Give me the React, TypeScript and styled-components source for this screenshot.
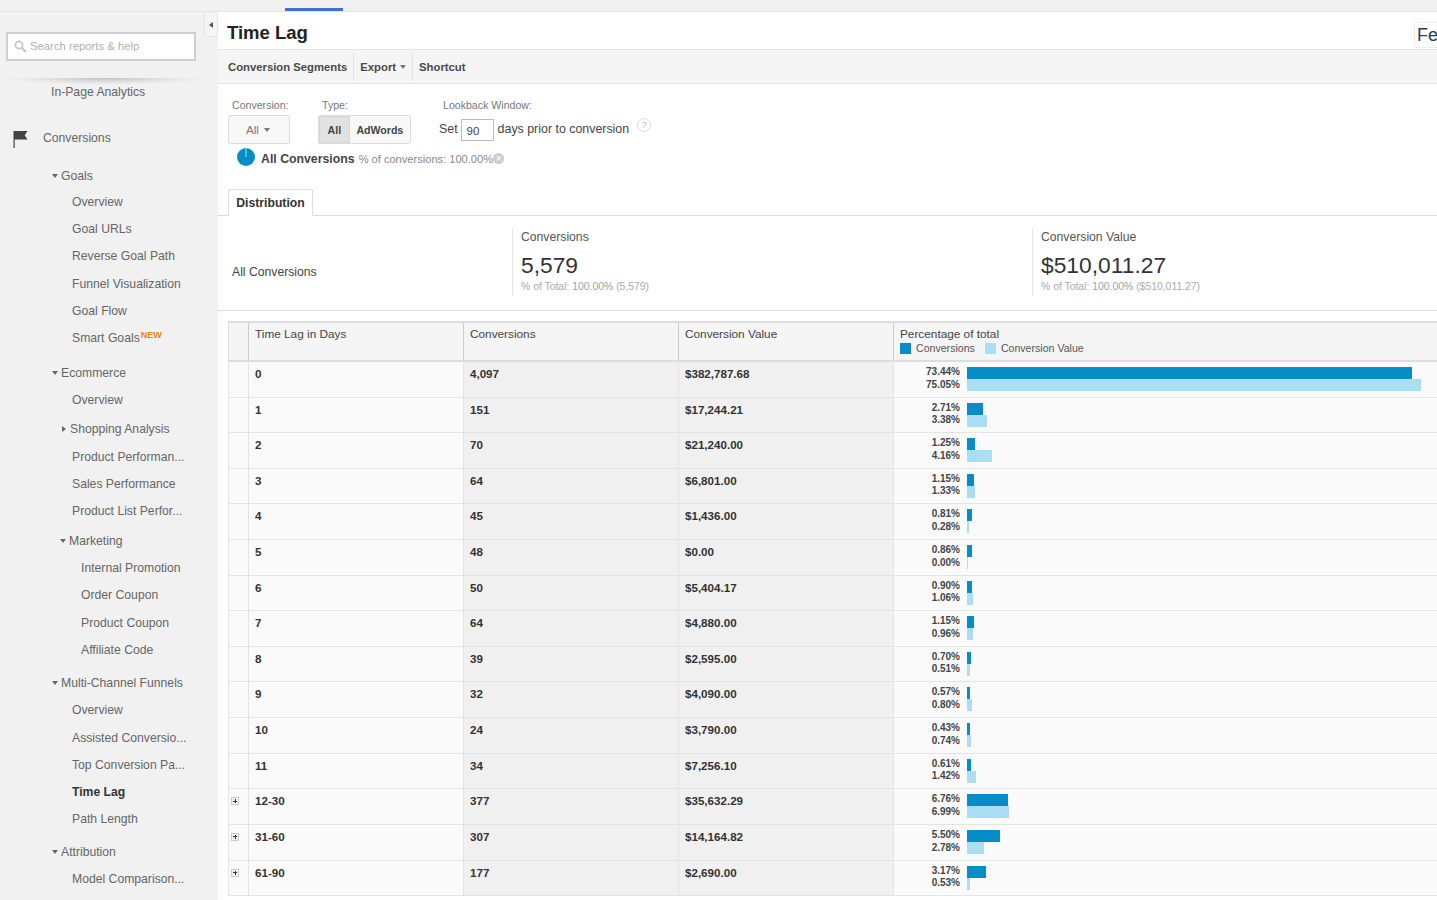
import React from "react";
import styled, { createGlobalStyle } from "styled-components";

const Global = createGlobalStyle`
  html, body { margin: 0; padding: 0; height: 100%; overflow: hidden; background: #fff; }
  body { font-family: "Liberation Sans", Arial, sans-serif; color: #333; }
  * { box-sizing: border-box; }
`;

const Page = styled.div`
  width: 1437px; height: 900px; overflow: hidden; display: flex; flex-direction: column;
`;
const TopStrip = styled.div`
  height: 12px; flex: none; background: #f1f1f1; border-bottom: 1px solid #e6e6e6; padding: 8px 0 0 285px;
`;
const TopMarker = styled.div`
  width: 58px; height: 3px; background: #3f6fd8;
`;
const Body = styled.div`
  flex: 1; min-height: 0; display: flex;
`;
const Sidebar = styled.aside`
  width: 218px; flex: none; background: #f1f1f1; position: relative; overflow: hidden;
`;
const Collapse = styled.div`
  position: absolute; left: 204px; top: 1px; width: 14px; height: 24px; background: #f5f5f5;
  border: 1px solid #e6e6e6; border-top: 0; display: flex; align-items: center; justify-content: center;
`;
const CollapseArrow = styled.span`
  border-top: 3.5px solid transparent; border-bottom: 3.5px solid transparent; border-right: 4px solid #555;
`;
const SearchArea = styled.div`
  height: 66px; padding: 20px 22px 0 6px; position: relative;
  &::after {
    content: ""; position: absolute; left: 0; right: 8px; top: 100%; height: 7px;
    background: radial-gradient(ellipse 50% 100% at 50% 0, rgba(0,0,0,.2), rgba(0,0,0,.04) 70%, transparent);
  }
`;
const SearchBox = styled.div`
  height: 29px; width: 190px; background: #fff; border: 2px solid #cfcfcf; display: flex; align-items: center;
  padding: 0 0 1px 6px; gap: 3px; font-size: 11.3px; color: #b0b0b0;
`;
const NavRow = styled.div<{ $indent: number; $gap?: number; $bold?: boolean; $low?: boolean }>`
  height: 27.25px; display: flex; align-items: center; position: relative;
  padding-left: ${p => p.$indent}px; margin-top: ${p => p.$gap ?? 0}px;
  ${p => (p.$low ? "padding-top: 2px;" : "")}
  font-size: 12.2px; color: ${p => (p.$bold ? "#333" : "#666")}; font-weight: ${p => (p.$bold ? 700 : 400)};
  white-space: nowrap;
`;
const NewBadge = styled.sup`
  font-size: 9px; font-weight: 700; color: #e8860c; position: relative; top: -3px; line-height: 0;
  vertical-align: baseline; margin-left: 1px;
`;
const Tri = styled.span<{ $open: boolean }>`
  width: 0; height: 0; flex: none; margin-right: 3px;
  ${p => p.$open
    ? "border-left: 3.5px solid transparent; border-right: 3.5px solid transparent; border-top: 4px solid #666;"
    : "border-top: 3.5px solid transparent; border-bottom: 3.5px solid transparent; border-left: 4px solid #666; margin-right: 4px;"}
`;
const FlagWrap = styled.span`
  width: 30px; flex: none; display: flex; margin-left: -30px; margin-top: 2px;
`;
const Main = styled.main`
  flex: 1; min-width: 0; display: flex; flex-direction: column;
`;
const TitleBar = styled.div`
  height: 38px; flex: none; background: #fff; border-bottom: 1px solid #e3e3e3; display: flex; align-items: center;
  justify-content: space-between; padding-left: 9px;
`;
const Title = styled.h1`
  margin: 0; font-size: 18.5px; font-weight: 700; color: #222; position: relative; top: 2px;
`;
const FeBox = styled.div`
  width: 23px; height: 26px; margin-top: 8px; border: 1px solid #eee; border-right: 0; border-radius: 4px 0 0 4px;
  font-size: 18px; color: #2c3e50; overflow: hidden; padding-left: 2px; line-height: 24px;
`;
const Toolbar = styled.div`
  height: 34px; flex: none; background: #f5f5f5; border-bottom: 1px solid #e3e3e3; display: flex; align-items: center;
  padding-left: 10px;
`;
const ToolItem = styled.div<{ $first?: boolean }>`
  height: 28px; display: flex; align-items: center; gap: 4px; font-size: 11.3px; font-weight: 700; color: #4a4a4a;
  padding: 0 6px; ${p => (p.$first ? "padding-left: 0;" : "")}
  & + & { border-left: 1px solid #e3e3e3; }
`;
const Caret = styled.span<{ $c?: string }>`
  width: 0; height: 0; border-left: 3.5px solid transparent; border-right: 3.5px solid transparent;
  border-top: 4px solid ${p => p.$c ?? "#777"};
`;
const Filters = styled.div`
  height: 105px; flex: none; padding: 15px 0 0 10px; display: flex; flex-direction: column;
`;
const FilterRow = styled.div`
  display: flex; align-items: flex-start;
`;
const FilterGroup = styled.div<{ $width: number }>`
  width: ${p => p.$width}px; flex: none; display: flex; flex-direction: column; gap: 4px;
`;
const FilterLabel = styled.div`
  font-size: 10.6px; color: #777; height: 12px; line-height: 12px; padding-left: 4px;
`;
const SelectBtn = styled.div`
  width: 62px; height: 29px; border: 1px solid #ddd; border-radius: 2px; background: #f8f8f8; display: flex;
  align-items: center; justify-content: center; gap: 5px; font-size: 11.6px; color: #777; padding-right: 2px;
`;
const Segments = styled.div`
  width: 93px; height: 29px; border: 1px solid #ddd; border-radius: 2px; display: flex; overflow: hidden; background: #f8f8f8;
`;
const Segment = styled.div<{ $active?: boolean }>`
  display: flex; align-items: center; justify-content: center; font-size: 10.6px; font-weight: 700; color: #444;
  width: ${p => (p.$active ? "31px" : "61px")};
  background: ${p => (p.$active ? "#e2e2e2" : "transparent")};
  ${p => (p.$active ? "box-shadow: inset 0 0 2px #bbb;" : "")}
`;
const LookRow = styled.div`
  display: flex; align-items: center; gap: 3px; font-size: 12.4px; color: #444; margin-top: 1px; height: 26px;
`;
const DaysInput = styled.div`
  width: 33px; height: 22px; border: 1px solid #bbb; font-size: 11.5px; padding-left: 5px; line-height: 22px; color: #444; margin: 1px 1px 0 0;
`;
const Help = styled.span`
  width: 14px; height: 14px; border-radius: 50%; border: 1px solid #ddd; font-size: 9px; color: #bbb; display: inline-flex;
  align-items: center; justify-content: center; margin: -8px 0 0 5px;
`;
const Legend = styled.div`
  display: flex; align-items: center; margin: 5px 0 0 9px; height: 20px;
`;
const PieWrap = styled.span`
  display: flex; margin-bottom: 4px;
`;
const LegendName = styled.span`
  font-size: 12.3px; font-weight: 700; color: #444; margin: 0 4px 0 6px;
`;
const LegendPct = styled.span`
  font-size: 11.1px; color: #888;
`;
const CloseDot = styled.span`
  width: 11px; height: 11px; border-radius: 50%; background: #ccc; color: #fff; font-size: 10px; line-height: 11px; text-align: center; margin-top: -2px;
`;
const TabBar = styled.div`
  height: 27px; flex: none; border-bottom: 1px solid #ddd; padding-left: 10px; display: flex;
`;
const Tab = styled.div`
  width: 85px; height: 27px; border: 1px solid #ddd; border-bottom: 1px solid #fff; font-size: 12.2px; font-weight: 700; color: #333;
  display: flex; align-items: center; justify-content: center; background: #fff; border-radius: 2px 2px 0 0;
`;
const Summary = styled.div`
  height: 95px; flex: none; display: grid; grid-template-columns: 294px 520px 1fr; border-bottom: 1px solid #ddd; padding-top: 13px;
`;
const SummaryName = styled.div`
  font-size: 12.2px; color: #444; padding: 0 0 0 14px; height: 67px; display: flex; align-items: center; position: relative; top: 9px;
`;
const SummaryCell = styled.div`
  height: 67px; border-left: 1px solid #e3e3e3; padding-left: 8px; display: flex; flex-direction: column;
`;
const SummaryLabel = styled.div`
  font-size: 12.2px; color: #555; line-height: 16px;
`;
const SummaryValue = styled.div`
  font-size: 22.8px; color: #333; line-height: 28px; margin-top: 6px;
`;
const SummaryNote = styled.div`
  font-size: 10.4px; color: #aaa; line-height: 14px; margin-top: 1px;
  & b { font-weight: 400; color: #8fa5a5; }
`;
const TableWrap = styled.div`
  margin: 10px 0 0 10px; flex: none;
`;
const gridCols = "20px 215px 215px 215px 560px";
const HeadRow = styled.div`
  display: grid; grid-template-columns: ${gridCols}; height: 41px; background: #f5f5f5;
  border-top: 2px solid #ddd; border-left: 1px solid #ddd; border-bottom: 2px solid #ddd;
`;
const HeadCell = styled.div`
  border-right: 1px solid #ccc; font-size: 11.8px; color: #444; padding: 4px 0 0 6px; line-height: 14px;
  &:last-child { border-right: 0; }
`;
const LegendLine = styled.div`
  display: flex; align-items: center; font-size: 10.6px; color: #555; gap: 5px;
`;
const Swatch = styled.span<{ $c: string }>`
  width: 11px; height: 11px; background: ${p => p.$c}; flex: none;
`;
const SecondSwatch = styled(Swatch)`
  margin-left: 5px;
`;
const Row = styled.div`
  display: grid; grid-template-columns: ${gridCols}; height: 35.62px; border-left: 1px solid #e6e6e6; border-bottom: 1px solid #e4e4e4;
`;
const Cell = styled.div<{ $shade?: boolean }>`
  background: ${p => (p.$shade ? "#f0f0f0" : "#fafafa")}; border-right: 1px solid #e4e4e4;
  font-size: 11.6px; font-weight: 700; color: #333; padding: 5px 0 0 6px; line-height: 14px;
`;
const CheckCell = styled(Cell)`
  padding: 8px 0 0 2px; background: #fafafa;
`;
const PlusBox = styled.span`
  display: block; width: 8px; height: 8px; border: 1px solid #ccc; background: #eee; position: relative;
  &::before { content: ""; position: absolute; left: 1px; right: 1px; top: 2.5px; height: 1px; background: #333; }
  &::after { content: ""; position: absolute; top: 1px; bottom: 1px; left: 2.5px; width: 1px; background: #333; }
`;
const PctCell = styled.div`
  background: #fafafa; display: grid; grid-template-columns: 66px auto; justify-content: start; column-gap: 7px; padding-top: 4px;
`;
const PctLabels = styled.div`
  font-size: 10px; font-weight: 700; color: #444; line-height: 12.6px; text-align: right;
`;
const Bars = styled.div`
  display: flex; flex-direction: column; padding-top: 1px;
`;
const Bar = styled.div<{ $c: string }>`
  height: 12px; background: ${p => p.$c}; min-width: 1px;
`;

const BLUE = "#058dc7";
const LIGHT = "#aadff3";

const nav: { t: string; i: number; g?: number; tri?: "open" | "closed"; bold?: boolean; isNew?: boolean; flag?: boolean; low?: boolean }[] = [
  { t: "In-Page Analytics", i: 51, g: 0 },
  { t: "Conversions", i: 43, g: 19.5, flag: true },
  { t: "Goals", i: 52, g: 9, tri: "open", low: true },
  { t: "Overview", i: 72 },
  { t: "Goal URLs", i: 72 },
  { t: "Reverse Goal Path", i: 72 },
  { t: "Funnel Visualization", i: 72 },
  { t: "Goal Flow", i: 72 },
  { t: "Smart Goals", i: 72, isNew: true },
  { t: "Ecommerce", i: 52, g: 7, tri: "open", low: true },
  { t: "Overview", i: 72 },
  { t: "Shopping Analysis", i: 62, g: 2.5, tri: "closed" },
  { t: "Product Performan...", i: 72 },
  { t: "Sales Performance", i: 72 },
  { t: "Product List Perfor...", i: 72 },
  { t: "Marketing", i: 60, g: 2.5, tri: "open" },
  { t: "Internal Promotion", i: 81 },
  { t: "Order Coupon", i: 81 },
  { t: "Product Coupon", i: 81 },
  { t: "Affiliate Code", i: 81 },
  { t: "Multi-Channel Funnels", i: 52, g: 6, tri: "open" },
  { t: "Overview", i: 72 },
  { t: "Assisted Conversio...", i: 72 },
  { t: "Top Conversion Pa...", i: 72 },
  { t: "Time Lag", i: 72, bold: true },
  { t: "Path Length", i: 72 },
  { t: "Attribution", i: 52, g: 5.5, tri: "open" },
  { t: "Model Comparison...", i: 72 },
];

const rows: [string, string, string, number, number, boolean?][] = [
  ["0", "4,097", "$382,787.68", 73.44, 75.05],
  ["1", "151", "$17,244.21", 2.71, 3.38],
  ["2", "70", "$21,240.00", 1.25, 4.16],
  ["3", "64", "$6,801.00", 1.15, 1.33],
  ["4", "45", "$1,436.00", 0.81, 0.28],
  ["5", "48", "$0.00", 0.86, 0],
  ["6", "50", "$5,404.17", 0.9, 1.06],
  ["7", "64", "$4,880.00", 1.15, 0.96],
  ["8", "39", "$2,595.00", 0.7, 0.51],
  ["9", "32", "$4,090.00", 0.57, 0.8],
  ["10", "24", "$3,790.00", 0.43, 0.74],
  ["11", "34", "$7,256.10", 0.61, 1.42],
  ["12-30", "377", "$35,632.29", 6.76, 6.99, true],
  ["31-60", "307", "$14,164.82", 5.5, 2.78, true],
  ["61-90", "177", "$2,690.00", 3.17, 0.53, true],
];

const Flag = () => (
  <svg width="16" height="19" viewBox="0 0 16 19">
    <path d="M0.5 1h14l-2.8 4.2L14.5 9.5H1.7v8.5H0.5z" fill="#444" />
  </svg>
);
const SearchIcon = () => (
  <svg width="13" height="13" viewBox="0 0 13 13" fill="none" stroke="#c4c4c4">
    <circle cx="5" cy="5" r="3.6" strokeWidth="1.6" />
    <path d="M8 8l4 4" strokeWidth="2.2" />
  </svg>
);
const Pie = () => (
  <svg width="18" height="18" viewBox="0 0 18 18">
    <circle cx="9" cy="9" r="9" fill={BLUE} />
    <path d="M9 0v9" stroke="#fff" strokeWidth=".7" />
  </svg>
);

export default function App() {
  return (
    <Page>
      <Global />
      <TopStrip><TopMarker /></TopStrip>
      <Body>
        <Sidebar>
          <Collapse><CollapseArrow /></Collapse>
          <SearchArea>
            <SearchBox><SearchIcon />Search reports &amp; help</SearchBox>
          </SearchArea>
          <nav>
            {nav.map((n, idx) => (
              <NavRow key={idx} $indent={n.i} $gap={n.g} $bold={n.bold} $low={n.low}>
                {n.flag && <FlagWrap><Flag /></FlagWrap>}
                {n.tri && <Tri $open={n.tri === "open"} />}
                {n.t}
                {n.isNew && <NewBadge>NEW</NewBadge>}
              </NavRow>
            ))}
          </nav>
        </Sidebar>
        <Main>
          <TitleBar>
            <Title>Time Lag</Title>
            <FeBox>Fe</FeBox>
          </TitleBar>
          <Toolbar>
            <ToolItem $first>Conversion Segments</ToolItem>
            <ToolItem>Export <Caret /></ToolItem>
            <ToolItem>Shortcut</ToolItem>
          </Toolbar>
          <Filters>
            <FilterRow>
              <FilterGroup $width={90}>
                <FilterLabel>Conversion:</FilterLabel>
                <SelectBtn>All <Caret /></SelectBtn>
              </FilterGroup>
              <FilterGroup $width={121}>
                <FilterLabel>Type:</FilterLabel>
                <Segments>
                  <Segment $active>All</Segment>
                  <Segment>AdWords</Segment>
                </Segments>
              </FilterGroup>
              <FilterGroup $width={300}>
                <FilterLabel>Lookback Window:</FilterLabel>
                <LookRow>Set <DaysInput>90</DaysInput> days prior to conversion <Help>?</Help></LookRow>
              </FilterGroup>
            </FilterRow>
            <Legend>
              <PieWrap><Pie /></PieWrap>
              <LegendName>All Conversions</LegendName>
              <LegendPct>% of conversions: 100.00%</LegendPct>
              <CloseDot>×</CloseDot>
            </Legend>
          </Filters>
          <TabBar><Tab>Distribution</Tab></TabBar>
          <Summary>
            <SummaryName>All Conversions</SummaryName>
            <SummaryCell>
              <SummaryLabel>Conversions</SummaryLabel>
              <SummaryValue>5,579</SummaryValue>
              <SummaryNote>% of Total: <b>100.00%</b> (5,579)</SummaryNote>
            </SummaryCell>
            <SummaryCell>
              <SummaryLabel>Conversion Value</SummaryLabel>
              <SummaryValue>$510,011.27</SummaryValue>
              <SummaryNote>% of Total: <b>100.00%</b> ($510,011.27)</SummaryNote>
            </SummaryCell>
          </Summary>
          <TableWrap>
            <HeadRow>
              <HeadCell />
              <HeadCell>Time Lag in Days</HeadCell>
              <HeadCell>Conversions</HeadCell>
              <HeadCell>Conversion Value</HeadCell>
              <HeadCell>
                Percentage of total
                <LegendLine>
                  <Swatch $c={BLUE} />Conversions
                  <SecondSwatch $c={LIGHT} />Conversion Value
                </LegendLine>
              </HeadCell>
            </HeadRow>
            {rows.map(r => (
              <Row key={r[0]}>
                <CheckCell>{r[5] && <PlusBox />}</CheckCell>
                <Cell>{r[0]}</Cell>
                <Cell $shade>{r[1]}</Cell>
                <Cell $shade>{r[2]}</Cell>
                <PctCell>
                  <PctLabels>{r[3].toFixed(2)}%<br />{r[4].toFixed(2)}%</PctLabels>
                  <Bars>
                    <Bar $c={BLUE} style={{ width: r[3] * 6.06 }} />
                    <Bar $c={LIGHT} style={{ width: r[4] * 6.05 }} />
                  </Bars>
                </PctCell>
              </Row>
            ))}
          </TableWrap>
        </Main>
      </Body>
    </Page>
  );
}
